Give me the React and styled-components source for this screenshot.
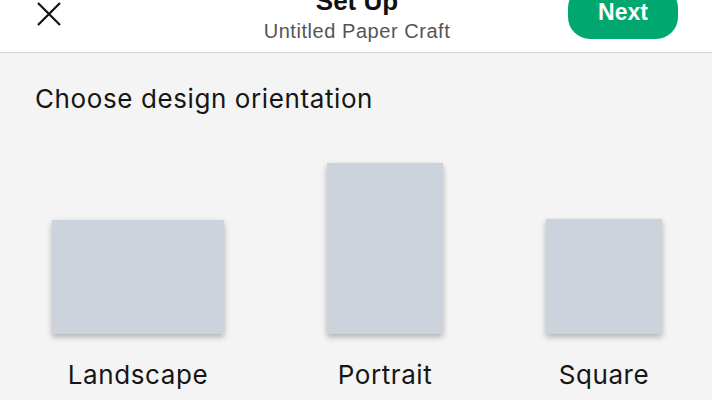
import React from "react";
import styled, { createGlobalStyle } from "styled-components";

const Global = createGlobalStyle`
  html, body { margin: 0; padding: 0; background: #f4f4f4; }
  body { font-family: Inter, Roboto, sans-serif; overflow: hidden; }
  * { box-sizing: border-box; }
`;

const Page = styled.div`
  width: 712px;
  height: 400px;
  overflow: hidden;
  background: #f4f4f4;
  display: flex;
  flex-direction: column;
`;

const Header = styled.header`
  margin-top: -14px;
  height: 67px;
  flex-shrink: 0;
  background: #ffffff;
  border-bottom: 1px solid #d2d2d2;
  display: grid;
  grid-template-columns: 1fr auto 1fr;
  align-items: start;
  padding: 0 34px 0 36px;
`;

const CloseButton = styled.button`
  justify-self: start;
  margin-top: 16px;
  width: 26px;
  height: 24px;
  padding: 0;
  border: 0;
  background: transparent;
  display: flex;
  align-items: center;
  justify-content: center;
  cursor: pointer;
`;

const TitleBlock = styled.div`
  display: flex;
  flex-direction: column;
  align-items: center;
  padding-top: 0;
`;

const Title = styled.div`
  font-family: "Liberation Sans", Arial, sans-serif;
  font-weight: 700;
  font-size: 26px;
  line-height: 30px;
  color: #111;
`;

const Subtitle = styled.div`
  margin-top: 4px;
  font-family: "Liberation Sans", Arial, sans-serif;
  font-size: 20px;
  line-height: 22px;
  letter-spacing: 0.55px;
  color: #555;
`;

const NextButton = styled.button`
  justify-self: end;
  width: 110px;
  height: 53px;
  border: 0;
  border-radius: 22px;
  background: #00a870;
  color: #fff;
  font-family: "Liberation Sans", Arial, sans-serif;
  font-weight: 700;
  font-size: 23px;
  cursor: pointer;
`;

const Body = styled.main`
  flex: 1;
  display: flex;
  flex-direction: column;
  padding: 31px 50px 0 35px;
`;

const Heading = styled.h1`
  margin: 0;
  font-family: Inter, Roboto, sans-serif;
  font-weight: 400;
  font-size: 26px;
  line-height: 30px;
  letter-spacing: 0.6px;
  color: #161616;
`;

const Options = styled.div`
  margin-top: 49px;
  padding-left: 17px;
  display: flex;
  justify-content: space-between;
  align-items: flex-end;
`;

const Option = styled.div`
  display: flex;
  flex-direction: column;
  align-items: center;
  cursor: pointer;
`;

const Paper = styled.div`
  width: ${(p) => p.$w}px;
  height: ${(p) => p.$h}px;
  background: #cdd3dc;
  box-shadow: 0 3px 6px rgba(0, 0, 0, 0.28);
`;

const Label = styled.div`
  margin-top: 26px;
  font-family: Inter, Roboto, sans-serif;
  font-size: 26px;
  line-height: 30px;
  letter-spacing: 0.6px;
  color: #161616;
`;

const options = [
  { label: "Landscape", w: 172, h: 114 },
  { label: "Portrait", w: 116, h: 171 },
  { label: "Square", w: 116, h: 115 },
];

export default function App() {
  return (
    <Page>
      <Global />
      <Header>
        <CloseButton aria-label="Close">
          <svg width="26" height="24" viewBox="0 0 26 24">
            <path d="M2 1 L24 23 M24 1 L2 23" stroke="#111" strokeWidth="2.2" fill="none" />
          </svg>
        </CloseButton>
        <TitleBlock>
          <Title>Set Up</Title>
          <Subtitle>Untitled Paper Craft</Subtitle>
        </TitleBlock>
        <NextButton>Next</NextButton>
      </Header>
      <Body>
        <Heading>Choose design orientation</Heading>
        <Options>
          {options.map((o) => (
            <Option key={o.label}>
              <Paper $w={o.w} $h={o.h} />
              <Label>{o.label}</Label>
            </Option>
          ))}
        </Options>
      </Body>
    </Page>
  );
}
